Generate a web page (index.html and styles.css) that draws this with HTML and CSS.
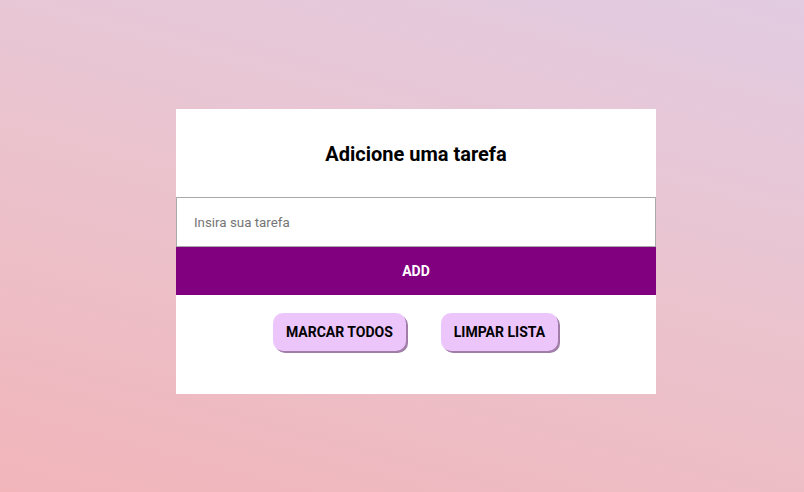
FILE: index.html
```html
<!DOCTYPE html>
<html lang="pt">
<head>
<meta charset="utf-8">
<link rel="stylesheet" href="styles.css">
</head>
<body>
<main class="page">
  <section class="card">
    <header class="card-head">
      <h1 class="title">Adicione uma tarefa</h1>
    </header>
    <input class="task-input" type="text" placeholder="Insira sua tarefa">
    <button class="add-btn">ADD</button>
    <div class="actions">
      <button class="pill-btn">MARCAR TODOS</button>
      <button class="pill-btn">LIMPAR LISTA</button>
    </div>
  </section>
</main>
</body>
</html>
```
FILE: styles.css
```css
* { box-sizing: border-box; }
html, body { margin: 0; height: 100%; }
body {
  font-family: Roboto, "Liberation Sans", sans-serif;
  background: linear-gradient(15deg, #f1b5ba 0%, #ebc3cd 50%, #e2cce2 100%);
}
.page {
  padding: 109px 0 0 176px;
}
.card {
  width: 480px;
  height: 285px;
  background: #fff;
  display: flex;
  flex-direction: column;
}
.card-head {
  height: 88px;
  display: flex;
  align-items: center;
  justify-content: center;
  padding-top: 1px;
}
.title {
  margin: 0;
  font-size: 20px;
  font-weight: 700;
  color: #000;
}
.task-input {
  height: 50px;
  width: 100%;
  border: 1px solid #a9a9a9;
  padding: 0 17px;
  font-family: Roboto, "Liberation Sans", sans-serif;
  font-size: 13.33px;
  outline: none;
}
.task-input::placeholder { color: #757575; }
.add-btn {
  height: 48px;
  width: 100%;
  border: none;
  background: #800080;
  color: #fff;
  font-family: Roboto, "Liberation Sans", sans-serif;
  font-weight: 700;
  font-size: 14px;
}
.actions {
  display: flex;
  justify-content: center;
  gap: 35px;
  padding: 18px 0 0 0;
  margin-left: -1px;
}
.pill-btn {
  height: 38px;
  padding: 0 13px;
  border: none;
  border-radius: 10px;
  background: #ecc5fb;
  color: #000;
  font-family: Roboto, "Liberation Sans", sans-serif;
  font-weight: 700;
  font-size: 14px;
  box-shadow: 2px 2px 0 #a07ea8;
}
```
